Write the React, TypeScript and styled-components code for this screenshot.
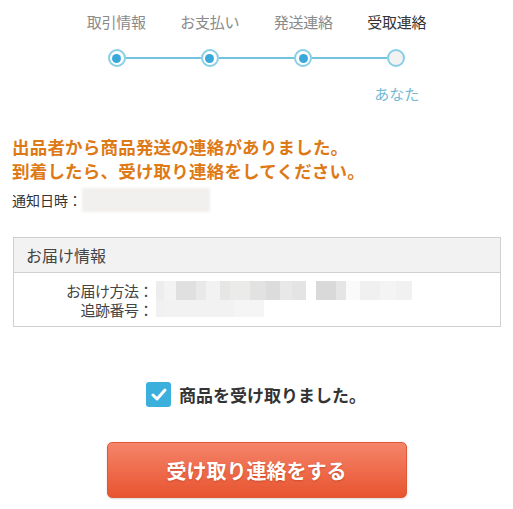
import React from "react";
import styled, { createGlobalStyle } from "styled-components";

const Global = createGlobalStyle`
  html, body { margin: 0; padding: 0; background: #fff; }
  body { font-family: "Noto Sans CJK JP", "Noto Sans", sans-serif; color: #333; }
`;

const Page = styled.div`
  width: 513px;
  height: 509px;
  box-sizing: border-box;
  padding-top: 9px;
`;

const Steps = styled.div`
  width: 374px;
  margin: 0 auto;
  display: flex;
  flex-direction: column;
`;

const LabelRow = styled.div`
  display: grid;
  grid-template-columns: repeat(4, 1fr);
`;

const StepLabel = styled.div<{ $current?: boolean }>`
  text-align: center;
  font-size: 15px;
  line-height: 26px;
  color: ${(p) => (p.$current ? "#333" : "#8a8a8a")};
  letter-spacing: -0.3px;
`;

const DotRow = styled.div`
  display: flex;
  align-items: center;
  margin: 13px auto 0;
  width: 298px;
  height: 20px;
`;

const Dot = styled.div<{ $done?: boolean }>`
  width: 18px;
  height: 18px;
  box-sizing: border-box;
  border-radius: 50%;
  border: 2px solid #86cfe6;
  background: ${(p) => (p.$done ? "#fff" : "#f2f2f2")};
  display: flex;
  align-items: center;
  justify-content: center;
  flex: none;
  &::after {
    content: "";
    display: ${(p) => (p.$done ? "block" : "none")};
    width: 9px;
    height: 9px;
    border-radius: 50%;
    background: #3aa9da;
  }
`;

const Line = styled.div`
  flex: 1;
  height: 2px;
  background: #72c3de;
`;

const YouRow = styled.div`
  display: grid;
  grid-template-columns: repeat(4, 1fr);
  margin-top: 14px;
`;

const You = styled.div`
  grid-column: 4;
  text-align: center;
  font-size: 15px;
  line-height: 24px;
  color: #72b9d4;
`;

const Notice = styled.div`
  margin: 29px 0 0 12px;
  font-size: 17.5px;
  font-weight: 700;
  line-height: 24px;
  color: #dd7a16;
  letter-spacing: 0.2px;
`;

const DateRow = styled.div`
  display: flex;
  align-items: center;
  margin: 4px 0 0 12px;
  font-size: 14px;
  height: 26px;
`;

const Blur = styled.div<{ $w: number; $h: number }>`
  width: ${(p) => p.$w}px;
  height: ${(p) => p.$h}px;
  background: #f1f0ef;
  filter: blur(1px);
`;

const InfoBox = styled.div`
  margin: 24px 12px 0 13px;
  border: 1px solid #d0d0d0;
`;

const InfoHeader = styled.div`
  height: 34px;
  background: #f2f2f2;
  border-bottom: 1px solid #d0d0d0;
  display: flex;
  align-items: center;
  padding-left: 12px;
  font-size: 16px;
  color: #444;
`;

const InfoBody = styled.div`
  padding: 8px 0 7px;
  display: grid;
  grid-template-columns: 139px 1fr;
  row-gap: 0;
`;

const InfoLabel = styled.div`
  text-align: right;
  font-size: 15px;
  line-height: 19px;
  color: #444;
  letter-spacing: -0.5px;
`;

const Mosaic = styled.div`
  display: flex;
  align-items: flex-start;
  height: 19px;
  padding-left: 3px;
`;

const Cell = styled.div<{ $w: number; $c: string; $h?: number }>`
  width: ${(p) => p.$w}px;
  height: ${(p) => p.$h ?? 19}px;
  background: ${(p) => p.$c};
`;

const CheckRow = styled.div`
  display: flex;
  align-items: center;
  justify-content: center;
  gap: 8px;
  margin-top: 55px;
  padding-right: 1px;
`;

const CheckBox = styled.div`
  width: 25px;
  height: 25px;
  border-radius: 3px;
  background: #3cb0dd;
  display: flex;
  align-items: center;
  justify-content: center;
`;

const CheckText = styled.div`
  font-size: 17px;
  font-weight: 700;
  color: #333;
`;

const Button = styled.button`
  display: block;
  margin: 35px auto 0;
  width: 300px;
  height: 56px;
  border: 1px solid #e0583a;
  border-radius: 5px;
  background: linear-gradient(#f5846a, #e8542f);
  color: #fff;
  font-family: inherit;
  font-size: 20px;
  font-weight: 700;
  text-shadow: 0 1px 2px rgba(150, 40, 10, 0.4);
  box-shadow: 0 1px 2px rgba(0,0,0,0.15);
  cursor: pointer;
`;

const row1 = [
  [8, "#ededed"], [12, "#f3f3f3"], [20, "#e0e0e0"], [10, "#e9e9e9"], [14, "#f2f2f2"], [10, "#e6e6e6"],
  [20, "#ebebea"], [16, "#e2e2e2"], [14, "#dcdcdc"], [12, "#e8e8e8"], [14, "#e4e4e4"], [10, "#fff"],
  [20, "#d9d9d9"], [10, "#e5e5e5"], [14, "#fafafa"], [20, "#f0f0f0"], [16, "#f4f4f4"], [16, "#f1f1f1"],
] as const;

const row2 = [
  [8, "#f1f1f1"], [70, "#f2f2f2"], [30, "#f5f5f5"],
] as const;

export default function App() {
  return (
    <Page>
      <Global />
      <Steps>
        <LabelRow>
          <StepLabel>取引情報</StepLabel>
          <StepLabel>お支払い</StepLabel>
          <StepLabel>発送連絡</StepLabel>
          <StepLabel $current>受取連絡</StepLabel>
        </LabelRow>
        <DotRow>
          <Dot $done />
          <Line />
          <Dot $done />
          <Line />
          <Dot $done />
          <Line />
          <Dot />
        </DotRow>
        <YouRow>
          <You>あなた</You>
        </YouRow>
      </Steps>
      <Notice>
        出品者から商品発送の連絡がありました。
        <br />
        到着したら、受け取り連絡をしてください。
      </Notice>
      <DateRow>
        通知日時：
        <Blur $w={128} $h={24} />
      </DateRow>
      <InfoBox>
        <InfoHeader>お届け情報</InfoHeader>
        <InfoBody>
          <InfoLabel>お届け方法：</InfoLabel>
          <Mosaic>
            {row1.map(([w, c], i) => (
              <Cell key={i} $w={w} $c={c} />
            ))}
          </Mosaic>
          <InfoLabel>追跡番号：</InfoLabel>
          <Mosaic>
            {row2.map(([w, c], i) => (
              <Cell key={i} $w={w} $c={c} $h={17} />
            ))}
          </Mosaic>
        </InfoBody>
      </InfoBox>
      <CheckRow>
        <CheckBox>
          <svg width="16" height="13" viewBox="0 0 16 13">
            <path d="M2 7 L6 11 L14 2" fill="none" stroke="#fff" strokeWidth="3" strokeLinecap="round" strokeLinejoin="round" />
          </svg>
        </CheckBox>
        <CheckText>商品を受け取りました。</CheckText>
      </CheckRow>
      <Button>受け取り連絡をする</Button>
    </Page>
  );
}
